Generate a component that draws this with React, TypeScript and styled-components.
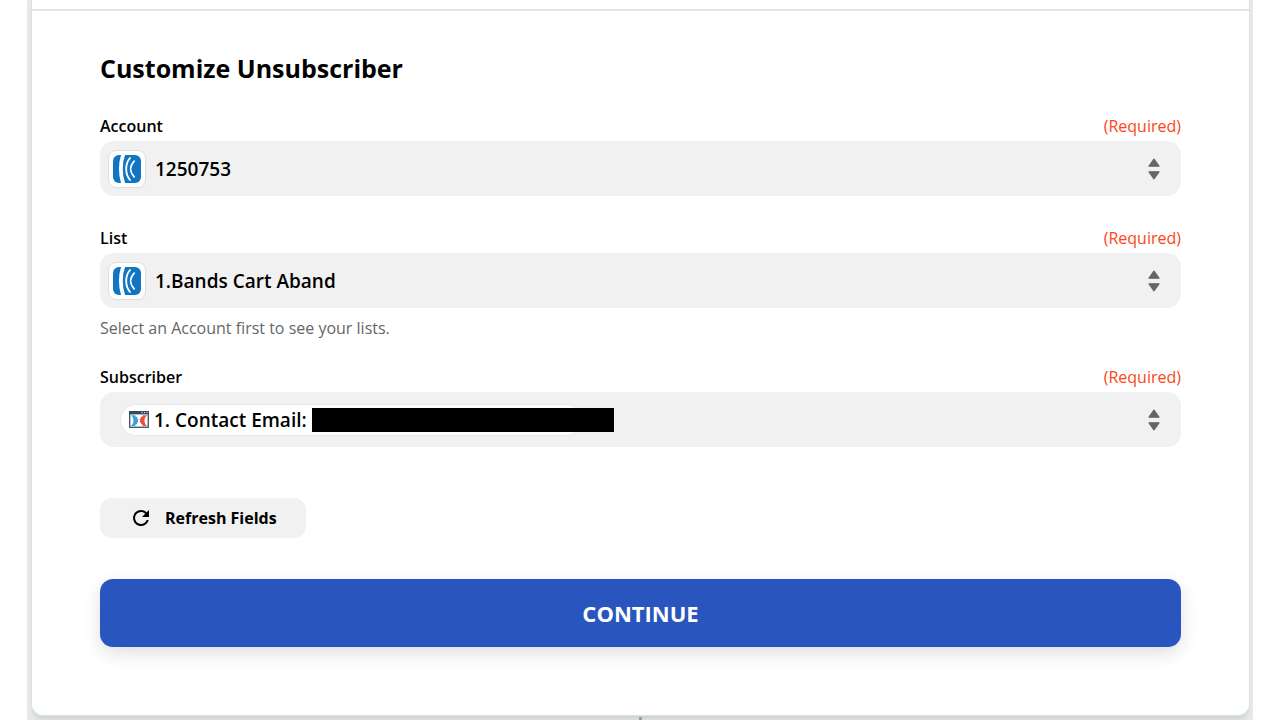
import React from "react";
import styled, { createGlobalStyle } from "styled-components";

const GlobalStyle = createGlobalStyle`
  *, *::before, *::after { box-sizing: border-box; }
  body {
    margin: 0;
    background: #fff;
    color: #000;
    font-family: "Open Sans", "Noto Sans", sans-serif;
  }
  button, select { font-family: inherit; color: inherit; }
`;

const Canvas = styled.main`
  display: flex;
  flex-direction: column;
  min-height: 100vh;
  margin: 0 27px;
  padding: 0 3px 0 4px;
  background: #e6e9ea;
`;

const Card = styled.section`
  background: #fff;
  border: 1px solid #dce1e3;
  border-top: 0;
  border-radius: 0 0 12px 12px;
  box-shadow: 0 6px 4px -2px rgba(60, 75, 75, 0.12);
`;

const CardTop = styled.div`
  height: 11px;
  border-bottom: 2px solid #e1e5e6;
`;

const Form = styled.form`
  display: flex;
  flex-direction: column;
  padding: 40px 68px 68px;
`;

const Title = styled.h1`
  margin: 0 0 26px;
  font-size: 25px;
  line-height: 34px;
  font-weight: 700;
`;

const Fields = styled.div`
  display: flex;
  flex-direction: column;
  gap: 22px;
`;

const LabelRow = styled.div`
  display: flex;
  justify-content: space-between;
  font-size: 16px;
  line-height: 30px;
`;

const Label = styled.label`
  font-weight: 600;
`;

const Required = styled.span`
  color: #fd4515;
`;

const Control = styled.div`
  display: flex;
  align-items: center;
  gap: 9px;
  height: 55px;
  margin-bottom: 5px;
  padding: 0 21px 0 8px;
  border-radius: 14px;
  background: #f1f1f1;
`;

const Select = styled.select`
  flex: 1;
  min-width: 0;
  align-self: stretch;
  padding: 0;
  border: 0;
  background: transparent;
  appearance: none;
  font-size: 19px;
  font-weight: 600;
`;

const TokenPicker = styled.button`
  display: flex;
  flex: 1;
  align-items: center;
  min-width: 0;
  align-self: stretch;
  padding: 0 0 0 13px;
  border: 0;
  background: transparent;
  font-size: 19px;
  line-height: 30px;
  font-weight: 600;
`;

const Token = styled.span`
  display: flex;
  align-items: center;
  gap: 5px;
  width: 460px;
  height: 30px;
  padding-left: 8px;
  border-radius: 15px;
  background: #fff;
  box-shadow: 0 0 0 1px #e9e9e9;
  white-space: nowrap;
`;

const Redaction = styled.span`
  flex: none;
  width: 302px;
  height: 24px;
  background: #000;
`;

const AppBadge = styled.span`
  display: grid;
  place-items: center;
  flex: none;
  width: 38px;
  height: 38px;
  border: 1px solid #d9dfe2;
  border-radius: 8px;
  background: #fff;
`;

const Drawing = styled.svg`
  display: block;
  flex: none;
`;

const Help = styled.p`
  margin: 8px 0 0;
  color: #666;
  font-size: 16px;
  line-height: 24px;
`;

const RefreshButton = styled.button`
  display: flex;
  align-items: center;
  align-self: flex-start;
  gap: 12px;
  height: 40px;
  margin-top: 46px;
  padding: 0 29px;
  border: 0;
  border-radius: 12px;
  background: #f1f1f1;
  font-size: 16px;
  font-weight: 700;
`;

const ContinueButton = styled.button`
  height: 68px;
  margin-top: 41px;
  border: 0;
  border-radius: 13px;
  background: #2855be;
  color: #fff;
  font-size: 22px;
  font-weight: 700;
  box-shadow: 0 6px 18px rgba(0, 0, 0, 0.13);
`;

const Connector = styled.div`
  align-self: center;
  flex: 1;
  width: 3px;
  min-height: 3px;
  margin-top: 1px;
  background: #989fa3;
`;

function AWeberLogo() {
  return (
    <AppBadge>
      <Drawing width="28" height="28" viewBox="0 0 28 28" aria-hidden="true">
        <rect width="28" height="28" rx="6" fill="#1275c1" />
        <g fill="none" stroke="#fff" strokeLinecap="round">
          <path d="M10.4 -1C7 8 7 20 10.4 29" strokeWidth="3.8" />
          <path d="M17 3C11.9 9 11.9 19 17 25" strokeWidth="1.9" />
          <path d="M21.2 6.2C16.6 11 16.6 17 21.2 21.8" strokeWidth="1.7" />
        </g>
      </Drawing>
    </AppBadge>
  );
}

function FunnelLogo() {
  return (
    <Drawing width="20" height="17" viewBox="0 0 20 17" aria-hidden="true">
      <rect x="0.7" y="0.7" width="18.6" height="15.6" fill="#fff" stroke="#465a6e" strokeWidth="1.4" />
      <path d="M0 0H20V3.4H0Z" fill="#34495e" />
      <path d="M12.5 1.6h1.2M15 1.6h1.2M17.4 1.6h1.2" stroke="#fff" strokeWidth="0.9" />
      <path d="M1.8 4.2H6.2L6.8 5.8L8 5.7L8.1 7.2L9.4 8L8.8 9.5L9.4 11L8.1 11.8L8 13.3L6.8 13.2L6.2 15H1.8C5.4 12.4 5.4 6.8 1.8 4.2Z" fill="#3fa0df" />
      <path d="M18.2 4.2H13.8L13.2 5.8L12 5.7L11.9 7.2L10.6 8L11.2 9.5L10.6 11L11.9 11.8L12 13.3L13.2 13.2L13.8 15H18.2C14.6 12.4 14.6 6.8 18.2 4.2Z" fill="#ee4f3d" />
    </Drawing>
  );
}

function SortArrows() {
  return (
    <Drawing width="12" height="22" viewBox="0 0 12 22" aria-hidden="true">
      <path d="M6 1.2L11 8.2H1Z M6 20.8L11 13.8H1Z" fill="#666" stroke="#666" strokeWidth="1.2" strokeLinejoin="round" />
    </Drawing>
  );
}

function RefreshIcon() {
  return (
    <Drawing width="24" height="24" viewBox="0 0 24 24" aria-hidden="true">
      <path
        d="M17.65 6.35A7.96 7.96 0 0 0 12 4a8 8 0 1 0 7.73 10h-2.08A6 6 0 1 1 12 6c1.66 0 3.14.69 4.22 1.78L13 11h7V4l-2.35 2.35z"
        fill="#000"
      />
    </Drawing>
  );
}

type FieldProps = {
  id: string;
  label: string;
  help?: string;
  children: React.ReactNode;
};

function Field({ id, label, help, children }: FieldProps) {
  return (
    <div>
      <LabelRow>
        <Label htmlFor={id}>{label}</Label>
        <Required>(Required)</Required>
      </LabelRow>
      <Control>
        {children}
        <SortArrows />
      </Control>
      {help && <Help id={`${id}-help`}>{help}</Help>}
    </div>
  );
}

export default function App() {
  return (
    <>
      <GlobalStyle />
      <Canvas>
        <Card>
          <CardTop />
          <Form onSubmit={(event) => event.preventDefault()}>
            <Title>Customize Unsubscriber</Title>
            <Fields>
              <Field id="account" label="Account">
                <AWeberLogo />
                <Select id="account" required>
                  <option>1250753</option>
                </Select>
              </Field>
              <Field id="list" label="List" help="Select an Account first to see your lists.">
                <AWeberLogo />
                <Select id="list" required aria-describedby="list-help">
                  <option>1.Bands Cart Aband</option>
                </Select>
              </Field>
              <Field id="subscriber" label="Subscriber">
                <TokenPicker id="subscriber" type="button" aria-haspopup="listbox">
                  <Token>
                    <FunnelLogo />
                    <span>1. Contact Email:</span>
                    <Redaction />
                  </Token>
                </TokenPicker>
              </Field>
            </Fields>
            <RefreshButton type="button">
              <RefreshIcon />
              Refresh Fields
            </RefreshButton>
            <ContinueButton type="submit">CONTINUE</ContinueButton>
          </Form>
        </Card>
        <Connector />
      </Canvas>
    </>
  );
}
